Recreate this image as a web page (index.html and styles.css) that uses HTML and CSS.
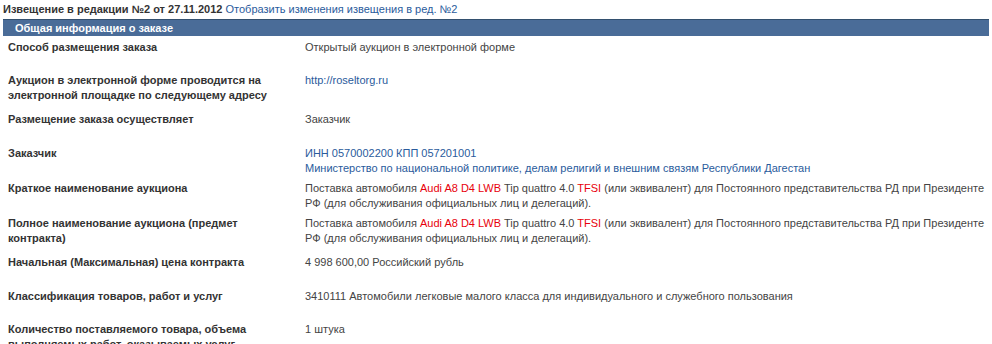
FILE: index.html
```
<!DOCTYPE html>
<html lang="ru">
<head>
<meta charset="utf-8">
<link rel="stylesheet" href="styles.css">
</head>
<body>
<div class="title"><span class="title-main">Извещение в редакции №2 от 27.11.2012</span> <a class="link" href="#">Отобразить изменения извещения в ред. №2</a></div>
<div class="section">
  <div class="section-head">Общая информация о заказе</div>
  <div class="row r1">
    <div class="label">Способ размещения заказа</div>
    <div class="value">Открытый аукцион в электронной форме</div>
  </div>
  <div class="row r2">
    <div class="label">Аукцион в электронной форме проводится на электронной площадке по следующему адресу</div>
    <div class="value"><a class="link" href="#">http://roseltorg.ru</a></div>
  </div>
  <div class="row r3">
    <div class="label">Размещение заказа осуществляет</div>
    <div class="value">Заказчик</div>
  </div>
  <div class="row r4">
    <div class="label">Заказчик</div>
    <div class="value"><a class="link" href="#">ИНН 0570002200 КПП 057201001<br>Министерство по национальной политике, делам религий и внешним связям Республики Дагестан</a></div>
  </div>
  <div class="row r5">
    <div class="label">Краткое наименование аукциона</div>
    <div class="value">Поставка автомобиля <span class="hl">Audi A8 D4 LWB</span> Tip quattro 4.0 <span class="hl">TFSI</span> (или эквивалент) для Постоянного представительства РД при Президенте РФ (для обслуживания официальных лиц и делегаций).</div>
  </div>
  <div class="row r6">
    <div class="label">Полное наименование аукциона (предмет контракта)</div>
    <div class="value">Поставка автомобиля <span class="hl">Audi A8 D4 LWB</span> Tip quattro 4.0 <span class="hl">TFSI</span> (или эквивалент) для Постоянного представительства РД при Президенте РФ (для обслуживания официальных лиц и делегаций).</div>
  </div>
  <div class="row r7">
    <div class="label">Начальная (Максимальная) цена контракта</div>
    <div class="value">4 998 600,00 Российский рубль</div>
  </div>
  <div class="row r8">
    <div class="label">Классификация товаров, работ и услуг</div>
    <div class="value">3410111 Автомобили легковые малого класса для индивидуального и служебного пользования</div>
  </div>
  <div class="row r9">
    <div class="label">Количество поставляемого товара, объема выполняемых работ, оказываемых услуг</div>
    <div class="value">1 штука</div>
  </div>
</div>
</body>
</html>
```
FILE: styles.css
```
html, body {
  margin: 0;
  padding: 0;
  background: #fff;
}
body {
  padding: 2px 3px 0 3px;
  font-family: "Liberation Sans", Arial, sans-serif;
  font-size: 11px;
  line-height: 15px;
  color: #333;
}
.title {
  height: 17px;
  line-height: 15px;
}
.title-main {
  font-weight: bold;
  color: #333;
}
.link {
  color: #2a5b9c;
  text-decoration: none;
}
.section {
  width: 986px;
}
.section-head {
  background: #4a6c98;
  border-top: 1px solid #33506f;
  color: #fff;
  font-weight: bold;
  height: 16px;
  line-height: 16px;
  padding-left: 12px;
}
.row {
  display: flex;
  padding: 4px 0 0 5px;
  box-sizing: border-box;
}
.label {
  width: 282px;
  padding-right: 15px;
  font-weight: bold;
  color: #333;
  flex: none;
}
.value {
  flex: 1;
  color: #444;
}
.hl {
  color: #e8000b;
}
.r1 { height: 33px; }
.r2 { height: 39px; }
.r3 { height: 34px; }
.r4 { height: 35px; }
.r5 { height: 35px; }
.r6 { height: 39px; }
.r7 { height: 34px; }
.r8 { height: 33px; }
.r9 { height: 40px; }
```
